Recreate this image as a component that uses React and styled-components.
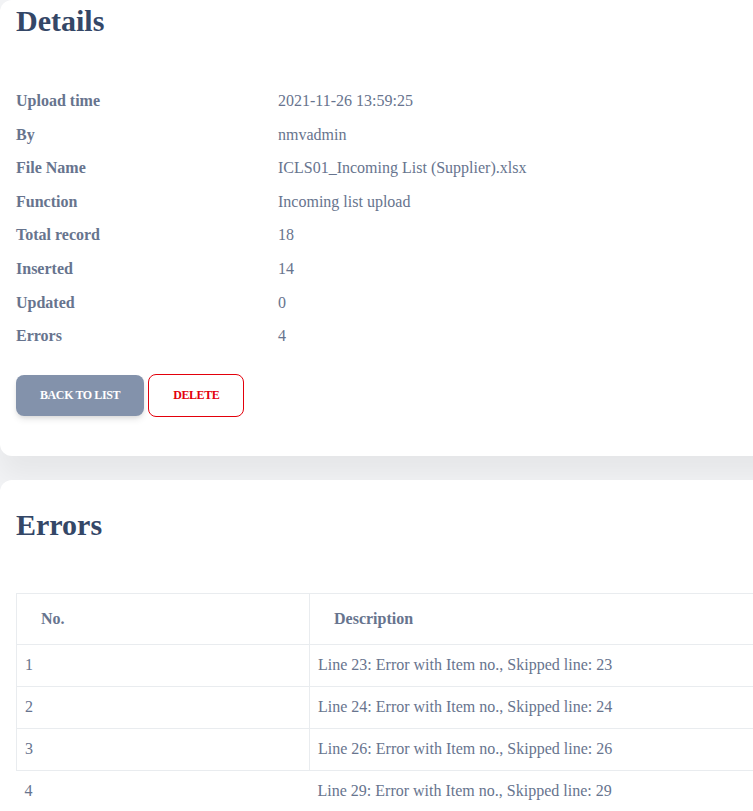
import styled, { createGlobalStyle } from "styled-components";

const GlobalStyle = createGlobalStyle`
  html, body {
    margin: 0;
    padding: 0;
    overflow-x: hidden;
    background-color: #f2f3f5;
    font-family: "Liberation Serif", "Times New Roman", serif;
  }
`;

const Page = styled.div`
  display: flex;
  flex-direction: column;
  gap: 24px;
  width: 1000px;
`;

const Card = styled.div`
  background-color: white;
  border-radius: 12px;
  padding: ${(p) => (p.$top ? "3px 16px 39px" : "27px 16px 40px")};
  box-shadow: 0 20px 27px 0 rgba(0, 0, 0, 0.05);
`;

const Heading = styled.h2`
  margin: 0 0 50px 0;
  font-size: 30px;
  line-height: 36px;
  font-weight: 700;
  color: #344767;
`;

const InfoGrid = styled.div`
  display: grid;
  grid-template-columns: 262px 1fr;
  row-gap: 9.6px;
  font-size: 16px;
  line-height: 24px;
  color: #67748e;
`;

const Label = styled.div`
  font-weight: 700;
`;

const Value = styled.div``;

const Actions = styled.div`
  display: flex;
  gap: 4px;
  margin-top: 26px;
  align-items: center;
`;

const Button = styled.button`
  font-family: "Liberation Serif", "Times New Roman", serif;
  font-size: 12px;
  line-height: 16.8px;
  font-weight: 700;
  letter-spacing: -0.4px;
  text-transform: uppercase;
  padding: 12px 24px;
  border-radius: 8px;
  cursor: pointer;
  border: ${(p) => (p.$danger ? "1px solid #e3000b" : "none")};
  background-color: ${(p) => (p.$danger ? "white" : "#8392ab")};
  color: ${(p) => (p.$danger ? "#e3000b" : "white")};
  box-shadow: ${(p) =>
    p.$danger ? "none" : "0 4px 7px -1px rgba(0,0,0,0.11), 0 2px 4px -1px rgba(0,0,0,0.07)"};
`;

const Table = styled.table`
  border-collapse: collapse;
  width: 100%;
  font-size: 16px;
  line-height: 24px;
  color: #67748e;
`;

const Th = styled.th`
  text-align: left;
  font-weight: 700;
  padding: 13px 24px;
  border: 1px solid #e9ecef;
`;

const Td = styled.td`
  padding: 8.5px 8px;
  border: 1px solid #e9ecef;
  ${(p) =>
    p.$last &&
    `
    border-left: none;
    border-right: none;
    border-bottom: none;
  `}
`;

const details = [
  ["Upload time", "2021-11-26 13:59:25"],
  ["By", "nmvadmin"],
  ["File Name", "ICLS01_Incoming List (Supplier).xlsx"],
  ["Function", "Incoming list upload"],
  ["Total record", "18"],
  ["Inserted", "14"],
  ["Updated", "0"],
  ["Errors", "4"],
];

const errors = [
  [1, 23],
  [2, 24],
  [3, 26],
  [4, 29],
];

export default function App() {
  return (
    <>
      <GlobalStyle />
      <Page>
        <Card $top>
          <Heading>Details</Heading>
          <InfoGrid>
            {details.map(([label, value]) => [
              <Label key={label}>{label}</Label>,
              <Value key={label + "-v"}>{value}</Value>,
            ])}
          </InfoGrid>
          <Actions>
            <Button>Back to list</Button>
            <Button $danger>Delete</Button>
          </Actions>
        </Card>
        <Card>
          <Heading>Errors</Heading>
          <Table>
            <colgroup>
              <col style={{ width: "293px" }} />
              <col />
            </colgroup>
            <thead>
              <tr>
                <Th>No.</Th>
                <Th>Description</Th>
              </tr>
            </thead>
            <tbody>
              {errors.map(([no, line], i) => {
                const last = i === errors.length - 1;
                return (
                  <tr key={no}>
                    <Td $last={last}>{no}</Td>
                    <Td $last={last}>
                      Line {line}: Error with Item no., Skipped line: {line}
                    </Td>
                  </tr>
                );
              })}
            </tbody>
          </Table>
        </Card>
      </Page>
    </>
  );
}
